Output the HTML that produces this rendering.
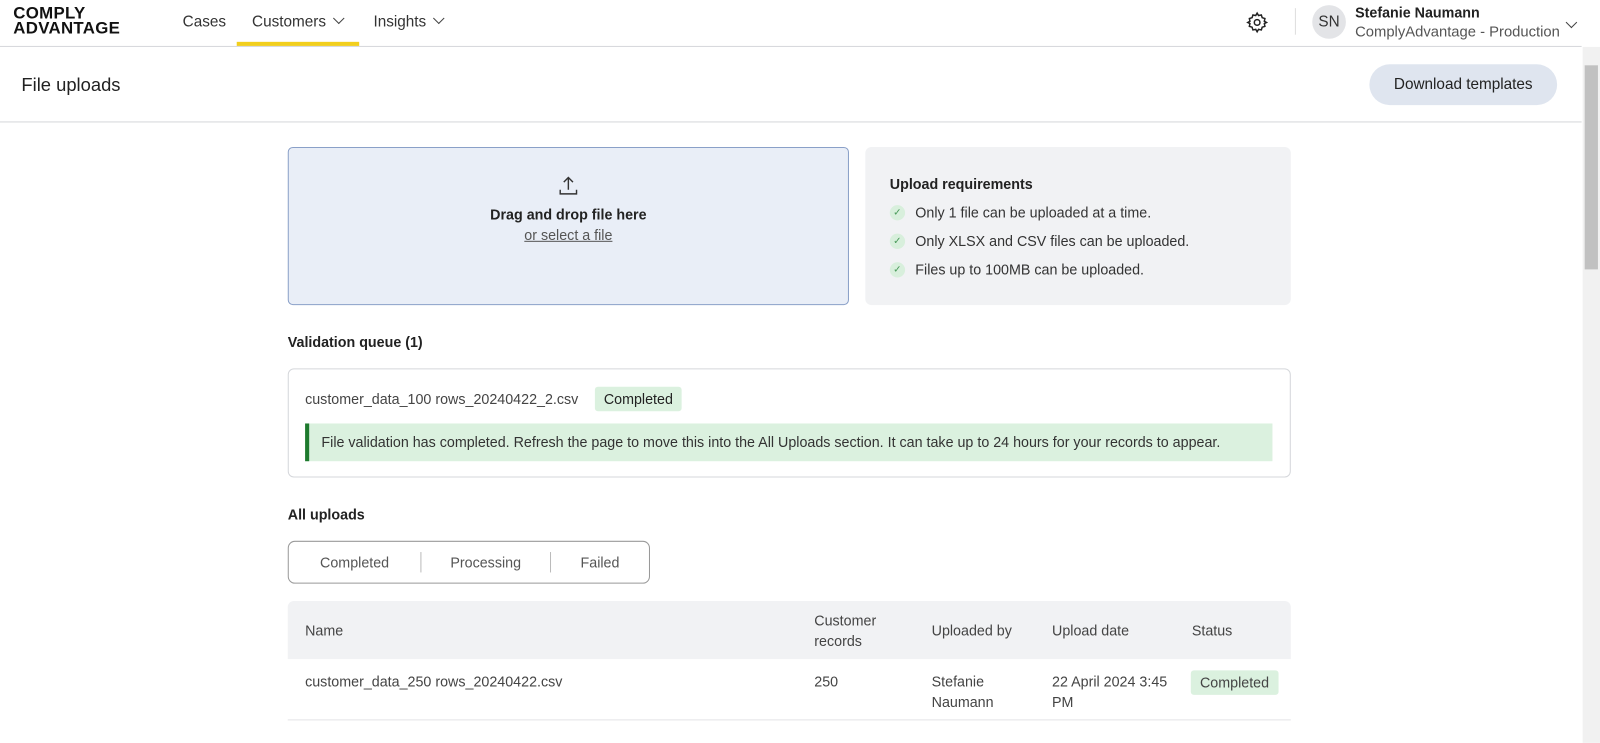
<!DOCTYPE html>
<html><head><meta charset="utf-8"><style>
*{box-sizing:border-box;margin:0;padding:0}
body{width:1600px;height:728px;overflow:hidden;background:#fff;font-family:"Liberation Sans",sans-serif;color:#333;font-size:14px}
#w{position:absolute;left:0;top:0;width:1568px;height:714px;transform:scale(1.0204);transform-origin:0 0}
.top{position:absolute;left:0;top:0;width:1550px;height:46px;border-bottom:1px solid #d5d7db;background:#fff}
.logo{position:absolute;left:13px;top:6px;font-weight:900;font-size:16.5px;line-height:14.5px;color:#111;letter-spacing:0.3px;font-family:"Liberation Sans",sans-serif}
.nav{position:absolute;top:13px;font-size:15px;color:#333}
.ul{position:absolute;left:232px;top:41px;width:120px;height:4px;background:#f2cf1d}
.chev{display:inline-block;width:8px;height:8px;border-right:1.3px solid #444;border-bottom:1.3px solid #444;transform:rotate(45deg);margin-left:8px;position:relative;top:-4px}
.hdr{position:absolute;left:0;top:46px;width:1550px;height:74px;border-bottom:1px solid #d5d7db}
.btn{position:absolute;left:1342px;top:17px;width:184px;height:40px;border-radius:20px;background:#dfe5ef;color:#222;font-size:15px;text-align:center;line-height:40px}
.drop{position:absolute;left:282px;top:144px;width:550px;height:155px;background:#e9eef7;border:1px solid #8aa0c8;border-radius:5px;text-align:center}
.req{position:absolute;left:848px;top:144px;width:417px;height:155px;background:#f1f2f4;border-radius:6px;padding:28px 24px}
.req li{list-style:none;margin-top:12px;font-size:14px;color:#333;display:flex;align-items:center}
.ck{width:15px;height:15px;border-radius:50%;background:#d8efdc;margin-right:10px;display:inline-flex;align-items:center;justify-content:center;color:#4a9a5a;font-size:10px}
.h{position:absolute;left:282px;font-weight:bold;font-size:14px;color:#222}
.vq{position:absolute;left:282px;top:361px;width:983px;height:107px;border:1px solid #d5d7db;border-radius:6px}
.tag{background:#dbf1df;border-radius:3px;padding:4px 9px;font-size:14px;color:#222}
.alert{position:absolute;left:16px;top:53px;width:948px;height:37px;background:#dbf1df;border-left:4px solid #1e7a2e;padding-left:12px;line-height:37px;font-size:14px;color:#333}
.tabs{position:absolute;left:282px;top:530px;width:355px;height:42px;border:1px solid #999;border-radius:7px;display:flex;align-items:center;font-size:14px;color:#555}
.tabs span{text-align:center}
.sep{width:1px;height:20px;background:#bbb}
.th{position:absolute;left:282px;top:589px;width:983px;height:57px;background:#f1f2f4;border-radius:6px 6px 0 0}
.c{position:absolute;font-size:14px;color:#444;line-height:20px}
.sb{position:absolute;left:1551px;top:46px;width:17px;height:682px;background:#f1f1f1}
</style></head><body><div id="w">
<div class="top">
<div class="logo">COMPLY<br>ADVANTAGE</div>
<div class="nav" style="left:179px">Cases</div>
<div class="nav" style="left:247px">Customers<span class="chev"></span></div>
<div class="nav" style="left:366px">Insights<span class="chev"></span></div>
<div class="ul"></div>
<svg style="position:absolute;left:1221px;top:11px" width="22" height="22" viewBox="0 0 24 24" fill="none" stroke="#222" stroke-width="1.6"><circle cx="12" cy="12" r="3"/><path d="M12 2l1.5 2.6 3-.6.9 2.9 2.9.9-.6 3L22 12l-2.3 1.2.6 3-2.9.9-.9 2.9-3-.6L12 22l-1.5-2.6-3 .6-.9-2.9-2.9-.9.6-3L2 12l2.3-1.2-.6-3 2.9-.9.9-2.9 3 .6z"/></svg>
<div style="position:absolute;left:1269px;top:8px;width:1px;height:26px;background:#ddd"></div>
<div style="position:absolute;left:1286px;top:5px;width:33px;height:33px;border-radius:50%;background:#e3e4e7;text-align:center;line-height:33px;font-size:15px;color:#333">SN</div>
<div style="position:absolute;left:1328px;top:4px;font-weight:bold;font-size:14px;color:#222">Stefanie Naumann</div>
<div style="position:absolute;left:1328px;top:24px;font-size:14.5px;color:#555">ComplyAdvantage - Production</div>
<span class="chev" style="position:absolute;left:1536px;top:18px;margin:0"></span>
</div>
<div class="hdr"><div style="position:absolute;left:21px;top:27px;font-size:18px;color:#222">File uploads</div><div class="btn">Download templates</div></div>
<div class="sb"><div style="position:absolute;left:2px;top:18px;width:13px;height:200px;background:#c1c1c1"></div></div>
<div class="drop">
<svg style="margin-top:26px" width="22" height="22" viewBox="0 0 22 22" fill="none" stroke="#333" stroke-width="1.4"><path d="M11 3v12M6.5 7.5L11 3l4.5 4.5M3 15v4h16v-4"/></svg>
<div style="font-weight:bold;font-size:14px;color:#222;margin-top:6px">Drag and drop file here</div>
<div style="text-decoration:underline;color:#555;margin-top:4px">or select a file</div>
</div>
<div class="req"><div style="font-weight:bold;color:#222">Upload requirements</div><ul>
<li><span class="ck">✓</span>Only 1 file can be uploaded at a time.</li>
<li><span class="ck">✓</span>Only XLSX and CSV files can be uploaded.</li>
<li><span class="ck">✓</span>Files up to 100MB can be uploaded.</li></ul></div>
<div class="h" style="top:327px">Validation queue (1)</div>
<div class="vq"><div style="position:absolute;left:16px;top:17px;display:flex;align-items:center;gap:16px;color:#444"><span>customer_data_100 rows_20240422_2.csv</span><span class="tag">Completed</span></div>
<div class="alert">File validation has completed. Refresh the page to move this into the All Uploads section. It can take up to 24 hours for your records to appear.</div></div>
<div class="h" style="top:496px">All uploads</div>
<div class="tabs"><span style="width:129px">Completed</span><span class="sep"></span><span style="width:126px">Processing</span><span class="sep"></span><span style="width:96px">Failed</span></div>
<div class="th"></div>
<div class="c" style="left:299px;top:608px">Name</div>
<div class="c" style="left:798px;top:598px">Customer<br>records</div>
<div class="c" style="left:913px;top:608px">Uploaded by</div>
<div class="c" style="left:1031px;top:608px">Upload date</div>
<div class="c" style="left:1168px;top:608px">Status</div>
<div class="c" style="left:299px;top:658px">customer_data_250 rows_20240422.csv</div>
<div class="c" style="left:798px;top:658px">250</div>
<div class="c" style="left:913px;top:658px">Stefanie<br>Naumann</div>
<div class="c" style="left:1031px;top:658px">22 April 2024 3:45<br>PM</div>
<div class="c tag" style="left:1167px;top:657px;padding:2px 9px">Completed</div>
<div style="position:absolute;left:282px;top:705px;width:983px;height:1px;background:#e3e4e7"></div>
</div></body></html>
